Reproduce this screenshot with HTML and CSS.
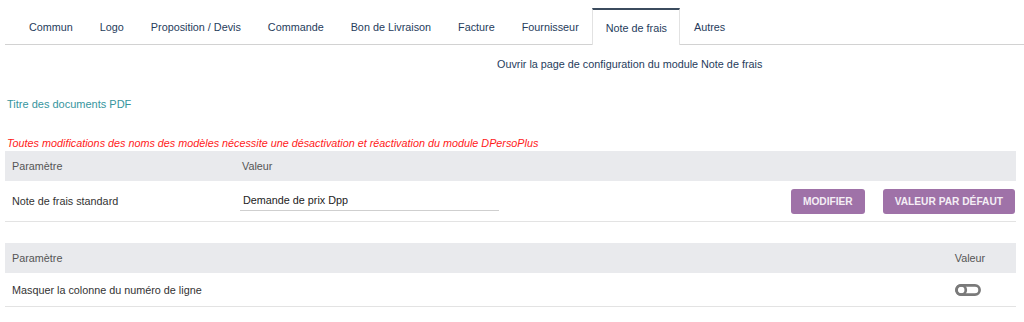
FILE: index.html
```html
<!DOCTYPE html>
<html lang="fr">
<head>
    <meta charset="UTF-8">
    <meta name="viewport" content="width=device-width, initial-scale=1.0">
    <title>DPersoPlus - Note de frais</title>
    <link rel="stylesheet" href="styles.css">
</head>
<body>
    <div class="tabs">
        <a class="tab">Commun</a>
        <a class="tab">Logo</a>
        <a class="tab">Proposition / Devis</a>
        <a class="tab">Commande</a>
        <a class="tab">Bon de Livraison</a>
        <a class="tab">Facture</a>
        <a class="tab">Fournisseur</a>
        <a class="tab active">Note de frais</a>
        <a class="tab">Autres</a>
    </div>

    <div class="config-link">
        <a>Ouvrir la page de configuration du module Note de frais</a>
    </div>

    <div class="section-title">Titre des documents PDF</div>

    <div class="warning">Toutes modifications des noms des modèles nécessite une désactivation et réactivation du module DPersoPlus</div>

    <div class="table">
        <div class="row header">
            <div class="col-param">Paramètre</div>
            <div class="col-value">Valeur</div>
        </div>
        <div class="row line">
            <div class="col-param">Note de frais standard</div>
            <div class="col-value">
                <input type="text" class="flat" value="Demande de prix Dpp">
            </div>
            <div class="col-actions">
                <button class="butAction">Modifier</button>
                <button class="butAction">Valeur par défaut</button>
            </div>
        </div>
    </div>

    <div class="table second">
        <div class="row header">
            <div class="col-param wide">Paramètre</div>
            <div class="col-toggle">Valeur</div>
        </div>
        <div class="row line short">
            <div class="col-param wide">Masquer la colonne du numéro de ligne</div>
            <div class="col-toggle">
                <svg class="toggle" width="26" height="12" viewBox="0 0 26 12">
                    <rect x="1.4" y="1.4" width="23.2" height="9.2" rx="4.6" fill="none" stroke="#7a7a7a" stroke-width="2.7"/>
                    <circle cx="6.2" cy="6" r="4.6" fill="none" stroke="#7a7a7a" stroke-width="2.7"/>
                </svg>
            </div>
        </div>
    </div>
</body>
</html>
```

FILE: styles.css
```css
body {
    margin: 0;
    padding: 8px 8px 0 5px;
    font-family: "Liberation Sans", Arial, sans-serif;
    font-size: 10.8px;
    color: #333;
    background: #fff;
}
.tabs {
    display: flex;
    height: 36px;
    border-bottom: 1px solid #d2d2d2;
    margin-right: -8px;
}
.tab {
    display: flex;
    align-items: center;
    padding: 0 12.5px;
    color: #263c5c;
    border-top: 2px solid transparent;
    border-left: 1px solid transparent;
    border-right: 1px solid transparent;
}
.tab:first-child {
    padding-left: 23px;
}
.tab.active {
    border-top-color: #3b4b5e;
    border-left-color: #e2e2e2;
    border-right-color: #e2e2e2;
    margin-bottom: -1px;
    background: #fff;
}
.config-link {
    padding-left: 492px;
    margin-top: 13px;
    color: #263c5c;
    line-height: 13px;
}
.section-title {
    margin-top: 26px;
    padding-left: 2px;
    color: #36959e;
    font-size: 11px;
    line-height: 14px;
}
.warning {
    margin-top: 26px;
    padding-left: 2px;
    color: #ff1a1a;
    font-style: italic;
    line-height: 12px;
}
.table {
    margin-top: 2px;
}
.table.second {
    margin-top: 21px;
}
.row {
    display: flex;
    align-items: center;
}
.row.header {
    height: 30px;
    background: #e9eaed;
    color: #555;
}
.row.line {
    height: 40px;
    border-bottom: 1px solid #e3e3e3;
}
.row.line.short {
    height: 33px;
}
.col-param {
    width: 230px;
    padding-left: 7px;
}
.col-param.wide {
    flex: 1;
}
.col-value {
    flex: 1;
}
.flat {
    width: 259px;
    box-sizing: border-box;
    border: none;
    border-bottom: 1px solid #cfcfcf;
    padding: 3px 3px 4px 3px;
    margin-left: -2px;
    font-family: inherit;
    font-size: 10.8px;
    color: #222;
    outline: none;
}
.col-actions {
    display: flex;
    gap: 18px;
    padding-right: 1px;
}
.butAction {
    height: 25px;
    padding: 0 12px;
    border: none;
    border-radius: 3px;
    background: #9f72a8;
    color: #f4eef5;
    font-family: inherit;
    font-size: 10.2px;
    font-weight: bold;
    text-transform: uppercase;
}
.col-toggle {
    width: 60px;
    margin-right: 16px;
    text-align: center;
}
.toggle {
    display: block;
    margin: 0 auto;
    position: relative;
    left: -2px;
}
```
